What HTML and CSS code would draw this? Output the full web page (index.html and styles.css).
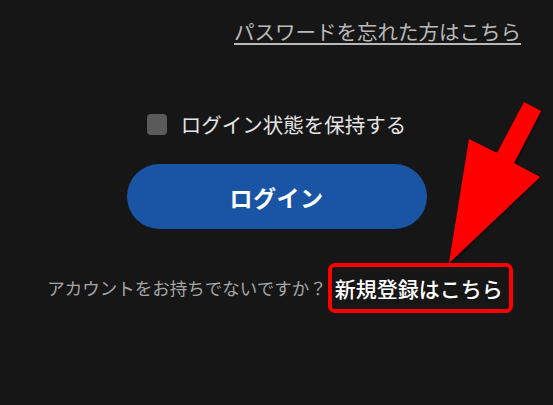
FILE: index.html
```html
<!DOCTYPE html>
<html lang="ja">
<head>
<meta charset="utf-8">
<link rel="stylesheet" href="styles.css">
</head>
<body>
<div class="page">
  <div class="forgot-row"><a class="forgot" href="#">パスワードを忘れた方はこちら</a></div>
  <label class="remember">
    <span class="checkbox"></span>
    <span class="remember-text">ログイン状態を保持する</span>
  </label>
  <button class="login">ログイン</button>
  <div class="signup-row">
    <span class="question">アカウントをお持ちでないですか？</span>
    <span class="signup-box"><a class="signup" href="#">新規登録はこちら</a></span>
  </div>
  <svg class="arrow" width="553" height="405" viewBox="0 0 553 405">
    <defs>
      <filter id="sh" x="-20%" y="-20%" width="140%" height="140%">
        <feDropShadow dx="1" dy="1" stdDeviation="1.5" flood-color="#000" flood-opacity="0.6"/>
      </filter>
    </defs>
    <polygon filter="url(#sh)" fill="#ff0000" points="449,263 469,139 497,153 524,102 541,111 514,163 540,177"/>
  </svg>
</div>
</body>
</html>
```
FILE: styles.css
```css
html, body {
  margin: 0;
  padding: 0;
  background: #161616;
}
body {
  font-family: "Noto Sans CJK JP", "Noto Sans", sans-serif;
  width: 553px;
  height: 405px;
  overflow: hidden;
}
.page {
  position: relative;
  width: 553px;
  height: 405px;
  display: flex;
  flex-direction: column;
  align-items: center;
}
.forgot-row {
  align-self: stretch;
  display: flex;
  justify-content: flex-end;
  padding-right: 32px;
  margin-top: 19px;
  height: 24px;
}
.forgot {
  color: #b9b9b9;
  font-size: 20.5px;
  line-height: 24px;
  text-decoration: underline;
  text-underline-offset: 3px;
  text-decoration-thickness: 2px;
}
.remember {
  display: flex;
  align-items: center;
  gap: 14px;
  margin-top: 69px;
  height: 24px;
}
.checkbox {
  width: 20px;
  height: 21px;
  border-radius: 4px;
  background: #5a5a5a;
}
.remember-text {
  color: #e4e4e4;
  font-size: 20.5px;
  line-height: 24px;
}
.login {
  margin-top: 28px;
  width: 300px;
  height: 65px;
  border: none;
  border-radius: 33px;
  background: #1a55a5;
  color: #ffffff;
  font-family: "Noto Sans CJK JP", sans-serif;
  font-weight: bold;
  font-size: 23px;
  letter-spacing: 0.5px;
  padding: 0;
}
.signup-row {
  display: flex;
  align-items: center;
  margin-top: 34px;
  margin-left: 7px;
}
.question {
  color: #a6a6a6;
  font-size: 17.5px;
  line-height: 24px;
}
.signup-box {
  display: inline-block;
  border: 4px solid #ff0000;
  border-radius: 7px;
  padding: 7px 6px 7px 3px;
  margin-left: 1px;
}
.signup {
  color: #ffffff;
  font-weight: 500;
  font-size: 21px;
  line-height: 28px;
  text-decoration: none;
  display: block;
}
.arrow {
  position: absolute;
  left: 0;
  top: 0;
  pointer-events: none;
}
```
